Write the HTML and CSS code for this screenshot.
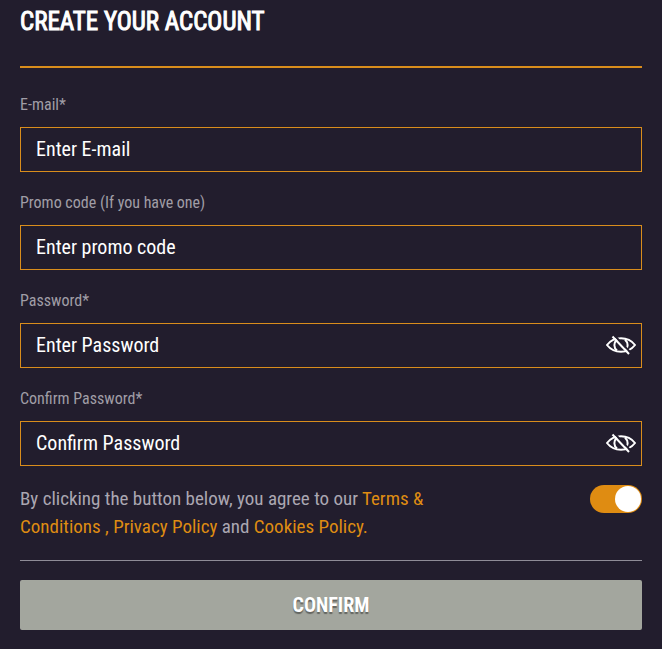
FILE: index.html
```
<!DOCTYPE html>
<html lang="en">
  <head>
    <meta charset="UTF-8" />
    <meta name="viewport" content="width=device-width, initial-scale=1.0" />
    <title>Create your account</title>
    <link rel="stylesheet" href="styles.css">
  </head>
  <body>
    <form class="signup">
      <h1 class="signup-title">Create your account</h1>

      <div class="field">
        <label for="email">E-mail*</label>
        <input type="email" id="email" placeholder="Enter E-mail" />
      </div>

      <div class="field">
        <label for="promo">Promo code (If you have one)</label>
        <input type="text" id="promo" placeholder="Enter promo code" />
      </div>

      <div class="field">
        <label for="password">Password*</label>
        <div class="password-box">
          <input type="password" id="password" placeholder="Enter Password" />
          <button type="button" class="eye" aria-label="Show password">
            <svg viewBox="0 0 30 20">
              <path d="M1 10C8 1 22 1 29 10C22 19 8 19 1 10Z" />
              <path d="M11 4.5C7.5 8 7.5 12.5 11 15.5M19 4.5C22.5 8 22.5 12.5 19 15.5" />
              <path class="eye-gap" d="M8.5 0.5L25 18" />
              <path d="M6.5 1.5L23 19" />
            </svg>
          </button>
        </div>
      </div>

      <div class="field">
        <label for="confirm">Confirm Password*</label>
        <div class="password-box">
          <input type="password" id="confirm" placeholder="Confirm Password" />
          <button type="button" class="eye" aria-label="Show password">
            <svg viewBox="0 0 30 20">
              <path d="M1 10C8 1 22 1 29 10C22 19 8 19 1 10Z" />
              <path d="M11 4.5C7.5 8 7.5 12.5 11 15.5M19 4.5C22.5 8 22.5 12.5 19 15.5" />
              <path class="eye-gap" d="M8.5 0.5L25 18" />
              <path d="M6.5 1.5L23 19" />
            </svg>
          </button>
        </div>
      </div>

      <div class="terms">
        <label for="agree">
          By clicking the button below, you agree to our
          <a href="#">Terms &amp; Conditions</a> <a href="#">, Privacy Policy</a>
          and <a href="#">Cookies Policy.</a>
        </label>
        <input type="checkbox" class="switch" id="agree" checked />
      </div>

      <button type="submit" class="confirm">Confirm</button>
    </form>
  </body>
</html>
```

FILE: styles.css
```
:root {
  --background: #221d2d;
  --accent: #df8c12;
  --border: #d98d1c;
  --text: #ffffff;
  --text-secondary: #a09da6;
}

* {
  margin: 0;
  padding: 0;
  box-sizing: border-box;
}

body {
  background: var(--background);
  color: var(--text);
  font-family: "Roboto Condensed", Roboto, sans-serif;
}

.signup {
  padding: 0 20px 20px;
}

.signup-title {
  padding: 7px 0 29px;
  margin-bottom: 27px;
  border-bottom: 2px solid var(--border);
  font-size: 25px;
  font-weight: 400;
  line-height: 30px;
  text-transform: uppercase;
  -webkit-text-stroke: 1px var(--text);
}

/* Fields */
.field + .field {
  margin-top: 21px;
}

.field label {
  display: block;
  margin-bottom: 12px;
  color: var(--text-secondary);
  font-size: 16px;
  line-height: 20px;
}

.field input {
  display: block;
  width: 100%;
  height: 45px;
  padding: 0 15px 2px;
  border: 1px solid var(--border);
  background: transparent;
  color: var(--text);
  font-family: inherit;
  font-size: 20px;
}

.field input::placeholder {
  color: var(--text);
}

.password-box {
  position: relative;
}

.eye {
  position: absolute;
  top: 12px;
  right: 6px;
  width: 30px;
  height: 20px;
  border: 0;
  background: none;
  cursor: pointer;
}

.eye svg {
  display: block;
  fill: none;
  stroke: var(--text);
  stroke-width: 2;
}

.eye .eye-gap {
  stroke: var(--background);
}

/* Terms */
.terms {
  display: flex;
  justify-content: space-between;
  align-items: flex-start;
  margin: 19px 0;
  padding-bottom: 19px;
  border-bottom: 1px solid #8f8c97;
}

.terms label {
  max-width: 420px;
  color: #aba7b2;
  font-size: 19px;
  line-height: 28px;
}

.terms a {
  color: var(--accent);
  text-decoration: none;
}

.switch {
  appearance: none;
  flex: none;
  display: flex;
  width: 52px;
  height: 28px;
  padding: 1px;
  border-radius: 14px;
  background: #8f8c97;
  cursor: pointer;
}

.switch::before {
  content: "";
  width: 26px;
  height: 26px;
  border-radius: 50%;
  background: var(--text);
}

.switch:checked {
  justify-content: flex-end;
  background: var(--accent);
}

.confirm {
  display: block;
  width: 100%;
  height: 50px;
  border: 0;
  border-radius: 2px;
  background: #a3a69e;
  color: var(--text);
  font-family: inherit;
  font-size: 20px;
  font-weight: 700;
  text-transform: uppercase;
  text-shadow: 0 2px 1px rgba(0, 0, 0, 0.4);
  cursor: pointer;
}
```
